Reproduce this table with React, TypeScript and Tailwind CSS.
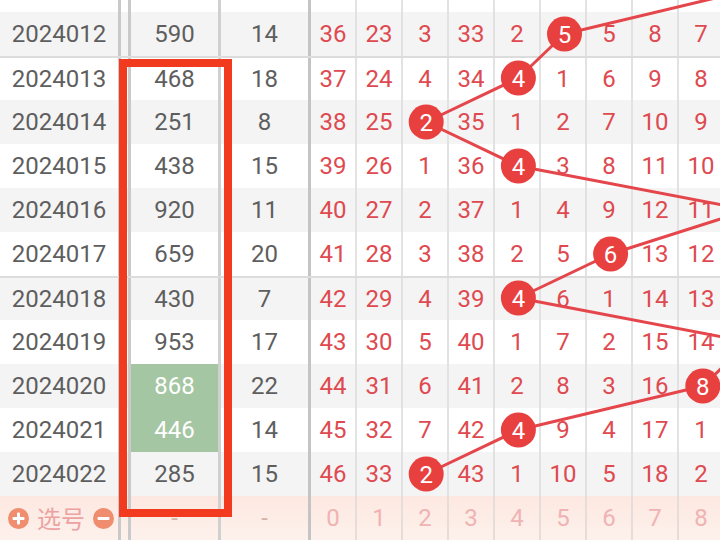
import React from 'react';

type Row = {
  issue: string;
  value: string;
  sum: string;
  miss: number[];
  hit: number;
  green?: boolean;
  groupTop?: boolean;
};

const rows: Row[] = [
  { issue: '2024012', value: '590', sum: '14', miss: [36, 23, 3, 33, 2, 0, 5, 8, 7], hit: 5 },
  { issue: '2024013', value: '468', sum: '18', miss: [37, 24, 4, 34, 0, 1, 6, 9, 8], hit: 4, groupTop: true },
  { issue: '2024014', value: '251', sum: '8', miss: [38, 25, 0, 35, 1, 2, 7, 10, 9], hit: 2 },
  { issue: '2024015', value: '438', sum: '15', miss: [39, 26, 1, 36, 0, 3, 8, 11, 10], hit: 4 },
  { issue: '2024016', value: '920', sum: '11', miss: [40, 27, 2, 37, 1, 4, 9, 12, 11], hit: 9 },
  { issue: '2024017', value: '659', sum: '20', miss: [41, 28, 3, 38, 2, 5, 0, 13, 12], hit: 6 },
  { issue: '2024018', value: '430', sum: '7', miss: [42, 29, 4, 39, 0, 6, 1, 14, 13], hit: 4, groupTop: true },
  { issue: '2024019', value: '953', sum: '17', miss: [43, 30, 5, 40, 1, 7, 2, 15, 14], hit: 9 },
  { issue: '2024020', value: '868', sum: '22', miss: [44, 31, 6, 41, 2, 8, 3, 16, 0], hit: 8, green: true },
  { issue: '2024021', value: '446', sum: '14', miss: [45, 32, 7, 42, 0, 9, 4, 17, 1], hit: 4, green: true },
  { issue: '2024022', value: '285', sum: '15', miss: [46, 33, 0, 43, 1, 10, 5, 18, 2], hit: 2 },
];

const TOP = 12;
const ROW_H = 44;
const colX = (i: number) => 334 + i * 46.1;
const rowY = (r: number) => TOP + r * ROW_H + ROW_H / 2;

function TableRow({ row, index }: { row: Row; index: number }) {
  const grey = index % 2 === 0;
  return (
    <div
      className={`flex h-[44px] shrink-0 items-center ${grey ? 'bg-[#f4f4f4]' : 'bg-white'} ${
        row.groupTop ? 'border-t-2 border-[#dcdcdc]' : ''
      }`}
    >
      <div className="w-[118px] shrink-0 text-center text-[#5e5e5e]">{row.issue}</div>
      <div className="h-full w-[3px] shrink-0 bg-[#c9c9c9]" />
      <div className="h-full w-[7px] shrink-0" />
      <div className="h-full w-[3px] shrink-0 bg-[#cacaca]" />
      <div
        className={`flex h-full w-[87px] shrink-0 items-center justify-center ${
          row.green ? 'bg-[#a5c6a2] text-white' : 'text-[#5e5e5e]'
        }`}
      >
        {row.value}
      </div>
      <div className="h-full w-[3px] shrink-0 bg-[#d0d0d0]" />
      <div className="w-[87px] shrink-0 text-center text-[#5e5e5e]">{row.sum}</div>
      <div className="h-full w-[3px] shrink-0 bg-[#c4c4c4]" />
      {row.miss.map((m, i) => (
        <div
          key={i}
          className="flex h-full w-[46px] shrink-0 items-center justify-center border-r-2 border-[#e2e2e2] text-[#de4a50]"
        >
          {i === row.hit ? '' : m}
        </div>
      ))}
    </div>
  );
}

function CircleIcon({ minus }: { minus?: boolean }) {
  return (
    <svg width="21" height="21" viewBox="0 0 21 21">
      <circle cx="10.5" cy="10.5" r="10.5" fill="#ef8d6e" />
      <rect x="4.5" y="9" width="12" height="3" rx="1" fill="white" />
      {!minus && <rect x="9" y="4.5" width="3" height="12" rx="1" fill="white" />}
    </svg>
  );
}

export default function App() {
  const points = [{ x: colX(9), y: rowY(-1) }, ...rows.map((r, i) => ({ x: colX(r.hit), y: rowY(i) }))];

  return (
    <div className="relative h-[540px] w-[720px] overflow-hidden bg-white font-['Roboto','Noto_Sans',sans-serif] text-[24px] leading-none">
      <div className="flex flex-col">
        {/* partial row above */}
        <div className="flex h-[12px] shrink-0 bg-white">
          <div className="w-[118px] shrink-0" />
          <div className="w-[3px] shrink-0 bg-[#c9c9c9]" />
          <div className="w-[7px] shrink-0" />
          <div className="w-[3px] shrink-0 bg-[#cacaca]" />
          <div className="w-[87px] shrink-0" />
          <div className="w-[3px] shrink-0 bg-[#d0d0d0]" />
          <div className="w-[87px] shrink-0" />
          <div className="w-[3px] shrink-0 bg-[#c4c4c4]" />
          {Array.from({ length: 9 }).map((_, i) => (
            <div key={i} className="w-[46px] shrink-0 border-r-2 border-[#e2e2e2]" />
          ))}
        </div>

        {rows.map((r, i) => (
          <TableRow key={r.issue} row={r} index={i} />
        ))}

        {/* bottom selector row */}
        <div className="flex h-[44px] shrink-0 items-center bg-gradient-to-b from-[#fde8e1] to-[#fdf1ec]">
          <div className="flex w-[118px] shrink-0 items-center gap-[8px] pl-[8px]">
            <CircleIcon />
            <span className="font-['Noto_Sans_CJK_SC',sans-serif] text-[24px] text-[#eca2a2]">选号</span>
            <CircleIcon minus />
          </div>
          <div className="h-full w-[3px] shrink-0 bg-[#c9c9c9]" />
          <div className="h-full w-[7px] shrink-0" />
          <div className="h-full w-[3px] shrink-0 bg-[#cacaca]" />
          <div className="w-[87px] shrink-0 text-center text-[#d6b2a8]">-</div>
          <div className="h-full w-[3px] shrink-0 bg-[#d0d0d0]" />
          <div className="w-[87px] shrink-0 text-center text-[#d6b2a8]">-</div>
          <div className="h-full w-[3px] shrink-0 bg-[#c4c4c4]" />
          {Array.from({ length: 9 }).map((_, i) => (
            <div
              key={i}
              className="flex h-full w-[46px] shrink-0 items-center justify-center border-r-2 border-[#e6dcd9] text-[#f0b3b3]"
            >
              {i}
            </div>
          ))}
        </div>
      </div>

      {/* trend line chart */}
      <svg className="pointer-events-none absolute left-0 top-0" width="720" height="540">
        <polyline
          points={points.map((p) => `${p.x},${p.y}`).join(' ')}
          fill="none"
          stroke="#e4464b"
          strokeWidth="3"
          strokeLinejoin="round"
        />
        {points.slice(1).map((p, i) =>
          p.x > 720 ? null : (
            <g key={i}>
              <circle cx={p.x} cy={p.y} r="17.5" fill="#e8403f" />
              <text
                x={p.x}
                y={p.y + 8.5}
                textAnchor="middle"
                fill="white"
                fontSize="24"
                fontFamily="Roboto, sans-serif"
              >
                {rows[i].hit}
              </text>
            </g>
          )
        )}
      </svg>

      {/* highlight box */}
      <div className="pointer-events-none absolute left-[119px] top-[59px] h-[458px] w-[113px] border-[8px] border-[#f23a1e]" />
    </div>
  );
}
